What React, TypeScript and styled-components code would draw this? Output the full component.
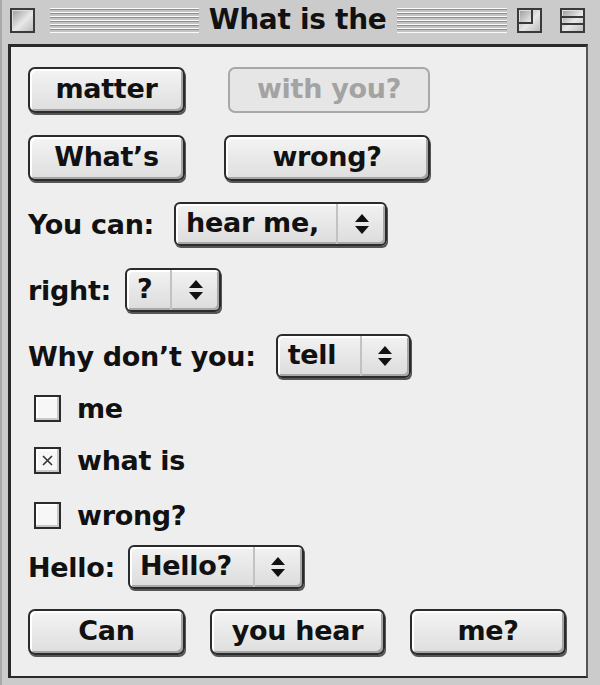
import styled, { createGlobalStyle } from "styled-components"

const Global = createGlobalStyle`
  html, body {
    margin: 0;
    padding: 0;
    background: #c8c8c8;
  }
  * { box-sizing: border-box; }
`

const Window = styled.div`
  width: 600px;
  height: 685px;
  background: #cbcbcb;
  border-left: 2px solid #a9a9a9;
  display: flex;
  flex-direction: column;
  font-family: "DejaVu Sans", "Liberation Sans", sans-serif;
  font-weight: bold;
  color: #111;
  overflow: hidden;
`

const TitleBar = styled.div`
  height: 40px;
  display: flex;
  align-items: center;
  padding: 0 15px 0 8px;
  gap: 10px;
`

const Stripes = styled.div<{ $grow: number }>`
  flex: ${(p) => p.$grow} 1 0;
  height: 25px;
  background: repeating-linear-gradient(
    to bottom,
    #fafafa 0 1px,
    #8e8e8e 1px 2px,
    #c4c4c4 2px 4px
  );
`

const Title = styled.div`
  font-size: 28px;
  letter-spacing: -0.3px;
  white-space: nowrap;
  padding-bottom: 2px;
`

const BoxButton = styled.div`
  width: 25px;
  height: 25px;
  border: 2px solid #3a3a3a;
  background: linear-gradient(135deg, #9a9a9a, #e8e8e8 55%, #bdbdbd);
  box-shadow: inset 1px 1px 0 #ddd;
  position: relative;
  flex: none;
`

const CloseWrap = styled.div`
  margin-right: 5px;
  display: flex;
`

const WidgetGroup = styled.div`
  display: flex;
  gap: 18px;
`

const Content = styled.div`
  flex: 1;
  margin: 4px 12px 7px 6px;
  border: 3px solid #2a2a2a;
  border-right-width: 2px;
  border-bottom-width: 2px;
  border-right-color: #555;
  background: #eeeeee;
  padding: 0 0 0 17px;
  display: flex;
  flex-direction: column;
`

const Row = styled.div<{ $mt: number; $gap?: number }>`
  display: flex;
  align-items: center;
  margin-top: ${(p) => p.$mt}px;
  gap: ${(p) => p.$gap ?? 0}px;
`

const Button = styled.div<{ $w: number; $disabled?: boolean }>`
  width: ${(p) => p.$w}px;
  height: 46px;
  border-radius: 7px;
  border: 2px solid ${(p) => (p.$disabled ? "#a8a8a8" : "#2b2b2b")};
  background: ${(p) =>
    p.$disabled ? "#e6e6e6" : "linear-gradient(to bottom, #f4f4f4, #dedede)"};
  box-shadow: ${(p) =>
    p.$disabled
      ? "none"
      : "inset 2px 2px 0 #ffffff, inset -2px -2px 0 #a4a4a4, 1px 2px 0 #555"};
  color: ${(p) => (p.$disabled ? "#a3a3a3" : "#111")};
  font-size: 27px;
  letter-spacing: -0.3px;
  display: flex;
  align-items: center;
  justify-content: center;
  padding-bottom: 3px;
`

const Label = styled.span`
  font-size: 27px;
  letter-spacing: -0.3px;
  white-space: nowrap;
`

const Popup = styled.div<{ $w: number }>`
  width: ${(p) => p.$w}px;
  height: 44px;
  border-radius: 6px;
  border: 2px solid #2b2b2b;
  background: linear-gradient(to bottom, #f2f2f2, #dcdcdc);
  box-shadow: inset 2px 2px 0 #ffffff, inset -2px -2px 0 #a8a8a8, 1px 2px 0 #555;
  display: flex;
  overflow: hidden;
  flex: none;
`

const PopupText = styled.div`
  flex: 1;
  font-size: 27px;
  letter-spacing: -0.3px;
  display: flex;
  align-items: center;
  padding: 0 0 3px 10px;
  white-space: nowrap;
`

const PopupArrow = styled.div`
  width: 49px;
  flex: none;
  border-left: 2px solid #c2c2c2;
  display: flex;
  align-items: center;
  justify-content: center;
`

const CheckRow = styled.div<{ $mt: number }>`
  display: flex;
  align-items: center;
  gap: 16px;
  height: 30px;
  margin-top: ${(p) => p.$mt}px;
  padding-left: 6px;
`

const CheckBox = styled.div`
  width: 27px;
  height: 27px;
  border: 2px solid #2b2b2b;
  background: #f7f7f7;
  box-shadow: inset -2px -2px 0 #c8c8c8, inset 2px 2px 0 #fff;
  display: flex;
  align-items: center;
  justify-content: center;
  flex: none;
`

const Arrows = () => (
  <svg width="16" height="24" viewBox="0 0 16 24">
    <path d="M8 2 L15 10 L1 10 Z" fill="#111" />
    <path d="M8 22 L15 14 L1 14 Z" fill="#111" />
  </svg>
)

const Cross = () => (
  <svg width="15" height="15" viewBox="0 0 15 15">
    <path d="M3 3 L12 12 M12 3 L3 12" stroke="#333" strokeWidth="1.6" />
  </svg>
)

const ZoomGlyph = () => (
  <svg width="21" height="21" viewBox="0 0 21 21" style={{ position: "absolute", left: 0, top: 0 }}>
    <path d="M13 0 V13 H0" fill="none" stroke="#3a3a3a" strokeWidth="2" />
  </svg>
)

const CollapseGlyph = () => (
  <svg width="21" height="21" viewBox="0 0 21 21" style={{ position: "absolute", left: 0, top: 0 }}>
    <path d="M0 7 H21 M0 14 H21" fill="none" stroke="#3a3a3a" strokeWidth="2" />
  </svg>
)

const App = () => {
  return (
    <>
      <Global />
      <Window>
        <TitleBar>
          <CloseWrap>
            <BoxButton />
          </CloseWrap>
          <Stripes $grow={148} />
          <Title>What is the</Title>
          <Stripes $grow={110} />
          <WidgetGroup>
            <BoxButton>
              <ZoomGlyph />
            </BoxButton>
            <BoxButton>
              <CollapseGlyph />
            </BoxButton>
          </WidgetGroup>
        </TitleBar>
        <Content>
          <Row $mt={20} $gap={43}>
            <Button $w={157}>matter</Button>
            <Button $w={202} $disabled>
              with you?
            </Button>
          </Row>
          <Row $mt={22} $gap={39}>
            <Button $w={157}>What’s</Button>
            <Button $w={206}>wrong?</Button>
          </Row>
          <Row $mt={21} $gap={20}>
            <Label>You can:</Label>
            <Popup $w={213}>
              <PopupText>hear me,</PopupText>
              <PopupArrow>
                <Arrows />
              </PopupArrow>
            </Popup>
          </Row>
          <Row $mt={22} $gap={14}>
            <Label>right:</Label>
            <Popup $w={96}>
              <PopupText>?</PopupText>
              <PopupArrow>
                <Arrows />
              </PopupArrow>
            </Popup>
          </Row>
          <Row $mt={22} $gap={20}>
            <Label>Why don’t you:</Label>
            <Popup $w={135}>
              <PopupText>tell</PopupText>
              <PopupArrow>
                <Arrows />
              </PopupArrow>
            </Popup>
          </Row>
          <CheckRow $mt={15}>
            <CheckBox />
            <Label>me</Label>
          </CheckRow>
          <CheckRow $mt={22}>
            <CheckBox>
              <Cross />
            </CheckBox>
            <Label>what is</Label>
          </CheckRow>
          <CheckRow $mt={25}>
            <CheckBox />
            <Label>wrong?</Label>
          </CheckRow>
          <Row $mt={15} $gap={13}>
            <Label>Hello:</Label>
            <Popup $w={176}>
              <PopupText>Hello?</PopupText>
              <PopupArrow>
                <Arrows />
              </PopupArrow>
            </Popup>
          </Row>
          <Row $mt={20} $gap={25}>
            <Button $w={157}>Can</Button>
            <Button $w={175}>you hear</Button>
            <Button $w={156}>me?</Button>
          </Row>
        </Content>
      </Window>
    </>
  )
}

export default App
